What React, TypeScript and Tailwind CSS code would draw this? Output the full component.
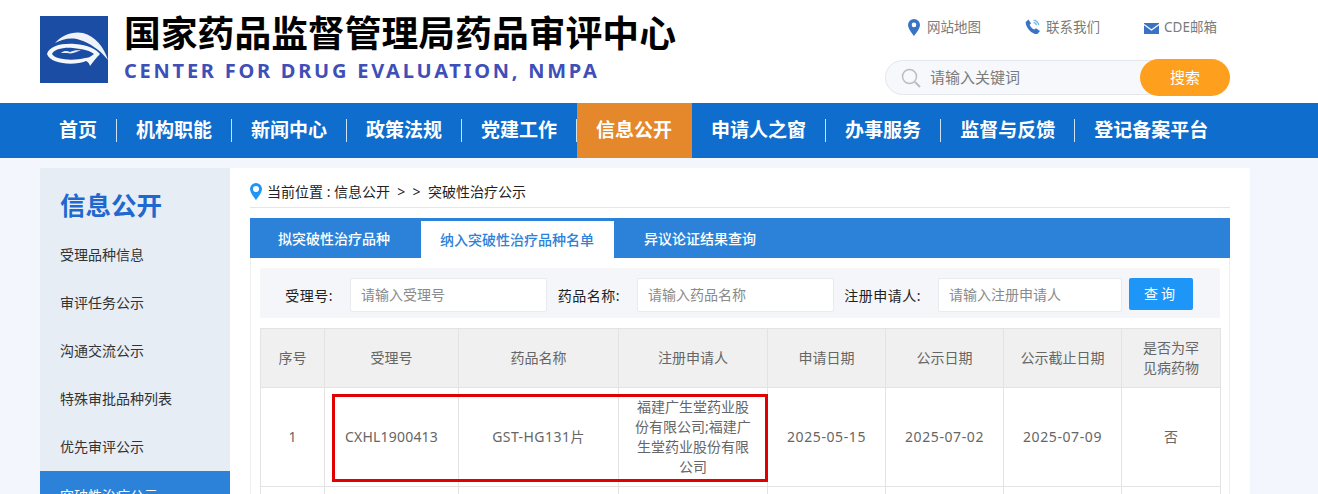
import React from "react";

const navItems = ["首页", "机构职能", "新闻中心", "政策法规", "党建工作", "信息公开", "申请人之窗", "办事服务", "监督与反馈", "登记备案平台"];
const sideItems = ["受理品种信息", "审评任务公示", "沟通交流公示", "特殊审批品种列表", "优先审评公示"];
const headers = ["序号", "受理号", "药品名称", "注册申请人", "申请日期", "公示日期", "公示截止日期", "是否为罕见病药物"];
const row = ["1", "CXHL1900413", "GST-HG131片", "福建广生堂药业股份有限公司;福建广生堂药业股份有限公司", "2025-05-15", "2025-07-02", "2025-07-09", "否"];
const rowSpacing = ["", "tracking-[0.2px]", "tracking-[0.45px]", "", "tracking-[0.6px]", "tracking-[0.6px]", "tracking-[0.6px]", ""];
const widths = [64, 134, 160, 149, 118, 118, 118, 99];

const Logo = () => (
  <svg viewBox="0 0 68 67" className="w-[68px] h-[67px] shrink-0">
    <rect width="68" height="67" fill="#1a4da3" />
    <path d="M15 27 C22 19 33 15 43 17 C55 20 64 31 68 44 C60 34 50 27 40 24 C31 21 23 23 15 27 Z" fill="#eef3fa" />
    <path d="M7 38 C9 30 22 27 35 28 C48 29 56 33 60 38 C56 42 53 46 50 50 C49 47 48 46 46 45 C34 50 10 48 7 38 Z" fill="#f4f7fb" />
    <path d="M12 38 C14 33 24 31 33 32 C43 33 51 35 54 38 C50 41 48 42 45 42 C34 45 15 44 12 38 Z" fill="#1a4da3" />
    <path d="M21 37 C24 34.500 27 34.500 30 36 C33 34.500 37 34 41 34.500 C37 35.500 34 37 31 37.500 C28 37 25 37 21 37 Z" fill="#e6edf7" />
  </svg>
);

const PinIcon = () => (
  <svg viewBox="0 0 12 17" className="w-[12px] h-[17px] shrink-0">
    <path fill="#3b73c4" d="M6 0a6 6 0 0 0-6 6c0 4 6 11 6 11s6-7 6-11a6 6 0 0 0-6-6Zm0 8.200a2.300 2.300 0 1 1 0-4.600 2.300 2.300 0 0 1 0 4.600Z" />
  </svg>
);

const PhoneIcon = () => (
  <svg viewBox="0 0 16 16" className="w-[16px] h-[16px] shrink-0">
    <path fill="#3b73c4" d="M.6 3.200 3.400.6 6 4.200 4.700 5.700c.7 2 2.300 3.800 4.600 4.900L11 9.200l4 2.900-2.600 3C7 15.500 1 9 .6 3.200Z" />
    <path fill="none" stroke="#6db5ea" strokeWidth="1.200" d="M8.600 1.200c2.400.100 5 2.400 5.200 5M8.600 3.700c1.200 0 2.600 1.200 2.700 2.600" />
  </svg>
);

const MailIcon = () => (
  <svg viewBox="0 0 15 11" className="w-[15px] h-[11px] shrink-0 mt-[3px]">
    <path fill="#3b73c4" d="M0 0h15v11H0z" />
    <path fill="none" stroke="#fff" strokeWidth="1.100" d="M0 1.500 7.500 7 15 1.500" />
  </svg>
);

const Field = ({ label, placeholder, labelW, inputW }: { label: string; placeholder: string; labelW: string; inputW: string }) => (
  <div className="flex items-center">
    <span className={`${labelW} text-[14px] tracking-[0.5px] text-[#222] text-right pr-[17px]`}>{label}</span>
    <div className={`${inputW} h-[34px] bg-white border border-[#e8ebef] rounded-[2px] pl-[10px] pb-[1px] flex items-center text-[14px] text-[#8a8a8a]`}>
      {placeholder}
    </div>
  </div>
);

export default function App() {
  return (
    <div
      className="w-[1318px] h-[494px] overflow-hidden bg-[#f3f7fd]"
      style={{ fontFamily: '"Noto Sans", "Noto Sans CJK SC", sans-serif' }}
    >
      <header className="h-[103px] bg-white flex justify-between pl-[40px] pr-[88px]">
        <div className="flex items-start pt-[16px] gap-[16px]">
          <Logo />
          <div>
            <div className="text-[36.800px] leading-[35px] font-bold text-black whitespace-nowrap">国家药品监督管理局药品审评中心</div>
            <div className="mt-[8px] text-[20px] leading-[24px] font-bold text-[#3f4fb8] tracking-[2.760px] whitespace-nowrap">
              CENTER FOR DRUG EVALUATION, NMPA
            </div>
          </div>
        </div>
        <div className="w-[345px] pt-[17px]">
          <div className="flex text-[13.500px] leading-[20px] text-[#7b7b7b] h-[20px] pl-[23px]">
            <div className="flex items-center gap-[7px] w-[117px]">
              <PinIcon />
              网站地图
            </div>
            <div className="flex items-center gap-[5px] w-[119px]">
              <PhoneIcon />
              联系我们
            </div>
            <div className="flex items-center gap-[5px] whitespace-nowrap">
              <MailIcon />
              CDE邮箱
            </div>
          </div>
          <div className="mt-[22px] h-[37px] relative">
            <div className="absolute left-0 right-0 top-[1px] h-[35px] rounded-full bg-[#f6f8fb] border border-[#e4e7ec] flex items-center pl-[15px] text-[15px] text-[#7b7b7b]">
              <svg viewBox="0 0 20 20" className="w-[20px] h-[20px] mr-[9px]" fill="none" stroke="#b9bcc2" strokeWidth="1.500">
                <circle cx="8.500" cy="8.500" r="7" />
                <path d="m14 14 5 5" strokeWidth="2" />
              </svg>
              请输入关键词
            </div>
            <div className="absolute right-0 top-0 w-[90px] h-[37px] rounded-full bg-[#ff9f1e] text-white text-[15px] flex items-center justify-center">
              搜索
            </div>
          </div>
        </div>
      </header>

      <nav className="h-[55px] bg-[#0e6dcd] flex pl-[40px]">
        {navItems.map((item, i) => (
          <React.Fragment key={item}>
            <div className={`h-full flex items-center ${i === 5 ? "bg-[#e5872b]" : ""}`}>
              <span className="px-[19px] text-[19px] font-bold text-white whitespace-nowrap">{item}</span>
            </div>
            {i < navItems.length - 1 && (
              <div className={`w-px h-full flex items-center ${i === 5 ? "bg-[#e5872b]" : ""}`}>
                <span className={`w-px h-[23px] ${i === 5 ? "" : "bg-white/80"}`} />
              </div>
            )}
          </React.Fragment>
        ))}
      </nav>

      <div className="flex mt-[10px] ml-[40px] w-[1210px] h-[326px] bg-white">
        <aside className="w-[190px] bg-[#e6edf5] shrink-0">
          <h2 className="h-[63px] pl-[20px] pb-[5px] flex items-end text-[25.500px] leading-[42px] font-bold text-[#1f68cf]">信息公开</h2>
          {sideItems.map((item) => (
            <div key={item} className="h-[48px] pl-[20px] pb-[2px] flex items-center text-[14px] text-[#333]">
              {item}
            </div>
          ))}
          <div className="h-[48px] pl-[20px] flex items-center text-[14px] text-white bg-[#2b82d8]">突破性治疗公示</div>
        </aside>

        <main className="w-[1020px] min-w-0 px-[20px] pt-[10px]">
          <div className="h-[30px] border-b border-[#e6e6e6] flex items-center gap-[5px] pb-[3px] text-[14px] text-[#222]">
            <svg viewBox="0 0 12 17" className="w-[12px] h-[17px] shrink-0">
              <path fill="#1e96f8" d="M6 0a6 6 0 0 0-6 6c0 4 6 11 6 11s6-7 6-11a6 6 0 0 0-6-6Zm0 9a3 3 0 1 1 0-6 3 3 0 0 1 0 6Z" />
            </svg>
            <span className="whitespace-pre">当前位置 : 信息公开  &gt;  &gt;  突破性治疗公示</span>
          </div>

          <div className="mt-[10px] h-[40px] bg-[#2b82d8] flex items-end text-[14px] font-medium text-white">
            <div className="h-full pl-[28px] pr-[31px] flex items-center">拟突破性治疗品种</div>
            <div className="h-[37px] pl-[19px] pr-[20px] bg-white text-[#2b82d8] flex items-center">纳入突破性治疗品种名单</div>
            <div className="h-full px-[30px] flex items-center">异议论证结果查询</div>
          </div>

          <div className="border-x border-[#eeeeee] px-[9px] pt-[10px] h-[300px]">
            <div className="h-[50px] bg-[#f4f6f9] flex items-start pt-[10px]">
              <Field label="受理号:" placeholder="请输入受理号" labelW="w-[90px]" inputW="w-[197px]" />
              <Field label="药品名称:" placeholder="请输入药品名称" labelW="w-[90px]" inputW="w-[197px]" />
              <Field label="注册申请人:" placeholder="请输入注册申请人" labelW="w-[104px]" inputW="w-[184px]" />
              <div className="ml-[7px] w-[64px] h-[32px] rounded-[2px] bg-[#1e96f8] text-white text-[14px] tracking-[3px] pb-[2px] flex items-center justify-center">查询</div>
            </div>

            <div className="relative mt-[10px]">
              <table className="w-[960px] table-fixed border-collapse text-[14px] text-[#666] text-center">
                <colgroup>
                  {widths.map((w, i) => (
                    <col key={i} style={{ width: w }} />
                  ))}
                </colgroup>
                <thead>
                  <tr className="h-[59px] bg-[#f0f0f0]">
                    {headers.map((h) => (
                      <th key={h} className="border border-[#e3e3e3] font-normal leading-[20px] px-[15px]">{h}</th>
                    ))}
                  </tr>
                </thead>
                <tbody>
                  <tr className="h-[99px]">
                    {row.map((c, i) => (
                      <td key={i} className={`border border-[#e3e3e3] leading-[20px] px-[15px] ${rowSpacing[i]}`}>{c}</td>
                    ))}
                  </tr>
                  <tr className="h-[60px]">
                    {row.map((_, i) => (
                      <td key={i} className="border border-[#e3e3e3]" />
                    ))}
                  </tr>
                </tbody>
              </table>
              <div className="absolute left-[72px] top-[66px] w-[436px] h-[88px] border-[3px] border-[#e00000] pointer-events-none" />
            </div>
          </div>
        </main>
      </div>
    </div>
  );
}
